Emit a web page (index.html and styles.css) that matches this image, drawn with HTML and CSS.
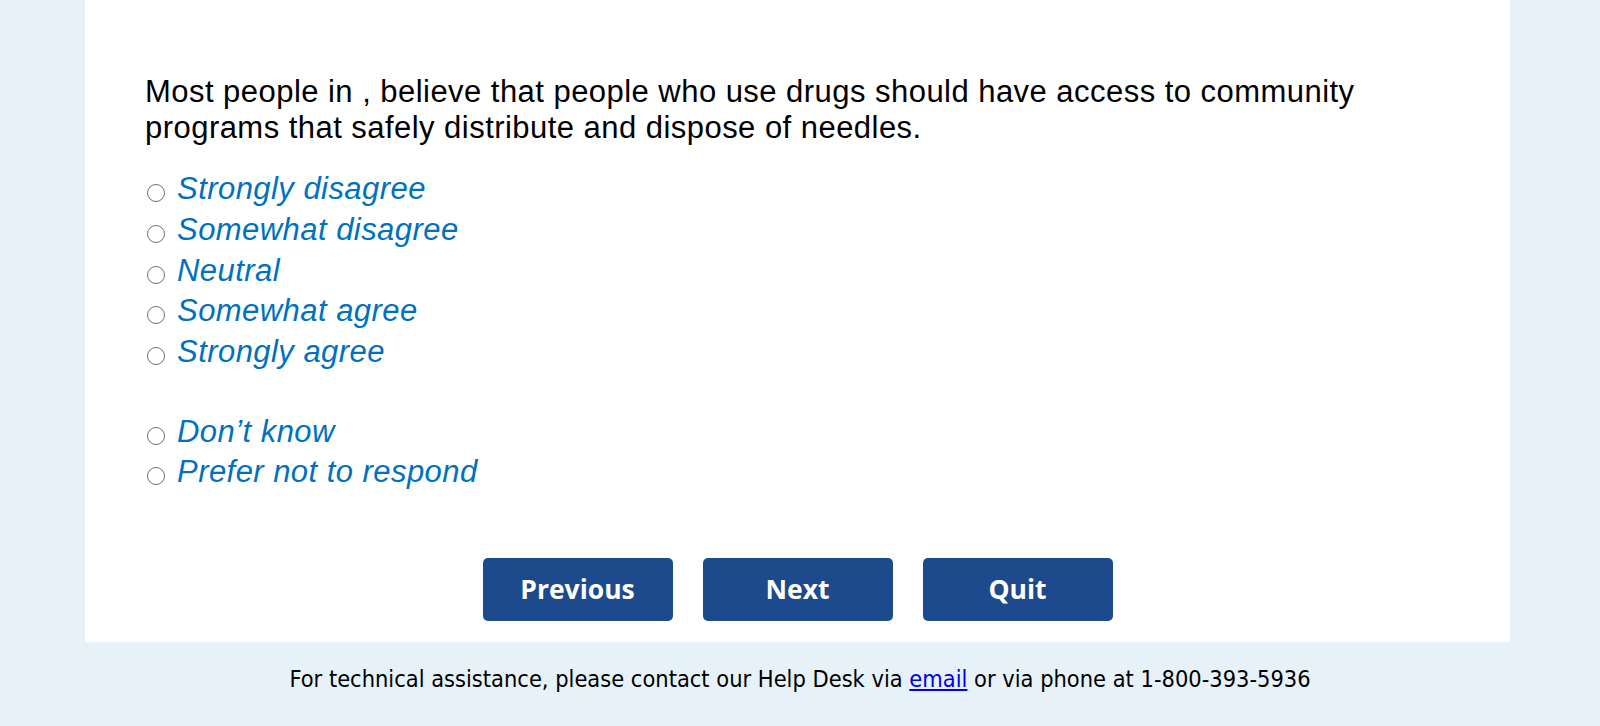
FILE: index.html
```html
<!DOCTYPE html>
<html lang="en">

<head>
    <meta charset="UTF-8">
    <meta name="viewport" content="width=device-width, initial-scale=1.0">
    <title>Survey</title>
    <link rel="stylesheet" href="styles.css">
</head>

<body>
    <main class="panel">
        <form class="question">
            <p class="question-text">Most people in , believe that people who use drugs should have access to community programs that safely distribute and dispose of needles.</p>

            <div class="options">
                <label class="option"><input type="radio" name="q1" value="1"><span>Strongly disagree</span></label>
                <label class="option"><input type="radio" name="q1" value="2"><span>Somewhat disagree</span></label>
                <label class="option"><input type="radio" name="q1" value="3"><span>Neutral</span></label>
                <label class="option"><input type="radio" name="q1" value="4"><span>Somewhat agree</span></label>
                <label class="option"><input type="radio" name="q1" value="5"><span>Strongly agree</span></label>
                <div class="option-spacer"></div>
                <label class="option"><input type="radio" name="q1" value="8"><span>Don&rsquo;t know</span></label>
                <label class="option"><input type="radio" name="q1" value="9"><span>Prefer not to respond</span></label>
            </div>

            <div class="nav-buttons">
                <button type="button">Previous</button>
                <button type="button">Next</button>
                <button type="button">Quit</button>
            </div>
        </form>
    </main>

    <footer class="footer">
        For technical assistance, please contact our Help Desk via <a href="#">email</a> or via phone at 1-800-393-5936
    </footer>
</body>

</html>
```

FILE: styles.css
```css
* {
    padding: 0;
    margin: 0;
    box-sizing: border-box;
}

body {
    background-color: #e6f1f8;
    font-family: "Liberation Sans", Arial, sans-serif;
}

.panel {
    width: 1425px;
    margin-left: 85px;
    padding: 74px 60px 21px;
    background-color: white;
}

.question-text {
    font-size: 31px;
    line-height: 36px;
    letter-spacing: 0.46px;
    color: black;
}

.options {
    margin-top: 23px;
    display: flex;
    flex-direction: column;
}

.option {
    display: flex;
    align-items: center;
    height: 40.7px;
    font-size: 31px;
    font-style: italic;
    letter-spacing: 0.45px;
    color: #0070c0;
    cursor: pointer;
}

.option input[type="radio"] {
    appearance: none;
    width: 18px;
    height: 18px;
    margin: 8px 12px 0 2px;
    border: 1.5px solid #707070;
    border-radius: 50%;
    background-color: white;
    flex-shrink: 0;
}

.option input[type="radio"]:checked {
    background: radial-gradient(#0070c0 40%, white 45%);
}

.option-spacer {
    height: 39px;
}

.nav-buttons {
    margin-top: 65px;
    display: flex;
    justify-content: center;
    gap: 30px;
}

.nav-buttons button {
    width: 190px;
    height: 63px;
    border: none;
    border-radius: 5px;
    background-color: #1d4a8c;
    color: white;
    font-family: "Open Sans", sans-serif;
    font-weight: 700;
    font-size: 26.5px;
}

.nav-buttons button:hover {
    background-color: #163a70;
    cursor: pointer;
}

.footer {
    height: 83px;
    padding-top: 23px;
    text-align: center;
    font-family: "DejaVu Sans Condensed", "DejaVu Sans", sans-serif;
    font-size: 23.4px;
    color: black;
}

.footer a {
    color: #0000ee;
}
```
